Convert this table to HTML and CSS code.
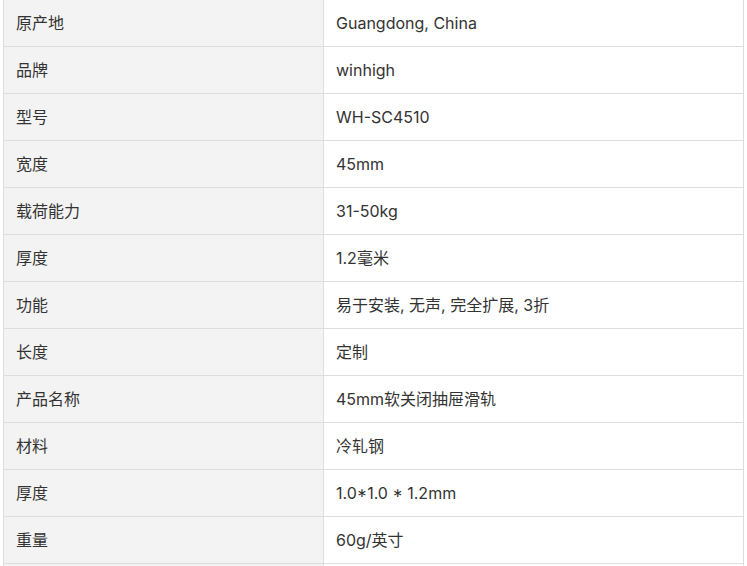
FILE: index.html
```html
<!DOCTYPE html>
<html>
<head>
<meta charset="utf-8">
<link rel="stylesheet" href="styles.css">
</head>
<body>
<table class="spec">
<colgroup><col class="k"><col class="v"></colgroup>
<tbody>
<tr><td class="key">原产地</td><td class="val">Guangdong, China</td></tr>
<tr><td class="key">品牌</td><td class="val">winhigh</td></tr>
<tr><td class="key">型号</td><td class="val">WH-SC4510</td></tr>
<tr><td class="key">宽度</td><td class="val">45mm</td></tr>
<tr><td class="key">载荷能力</td><td class="val">31-50kg</td></tr>
<tr><td class="key">厚度</td><td class="val">1.2毫米</td></tr>
<tr><td class="key">功能</td><td class="val">易于安装, 无声, 完全扩展, 3折</td></tr>
<tr><td class="key">长度</td><td class="val">定制</td></tr>
<tr><td class="key">产品名称</td><td class="val">45mm软关闭抽屉滑轨</td></tr>
<tr><td class="key">材料</td><td class="val">冷轧钢</td></tr>
<tr><td class="key">厚度</td><td class="val">1.0*1.0 * 1.2mm</td></tr>
<tr><td class="key">重量</td><td class="val">60g/英寸</td></tr>
<tr><td class="key"></td><td class="val"></td></tr>
</tbody>
</table>
</body>
</html>
```

FILE: styles.css
```css
html, body {
  margin: 0;
  padding: 0;
  background: #fff;
  overflow: hidden;
}
body {
  padding: 0 3px;
  font-family: Inter, "Noto Sans CJK SC", sans-serif;
  font-size: 16px;
  color: #333;
}
.spec {
  border-collapse: collapse;
  width: 741px;
  table-layout: fixed;
}
.k { width: 320px; }
.spec td {
  border: 1px solid #dddddd;
  height: 47px;
  padding: 0 12px;
  vertical-align: middle;
  box-sizing: border-box;
  line-height: 20px;
}
.spec tr:first-child td { border-top: none; height: 46px; }
.key { background: #f3f3f3; }
.val { background: #fff; }
```
